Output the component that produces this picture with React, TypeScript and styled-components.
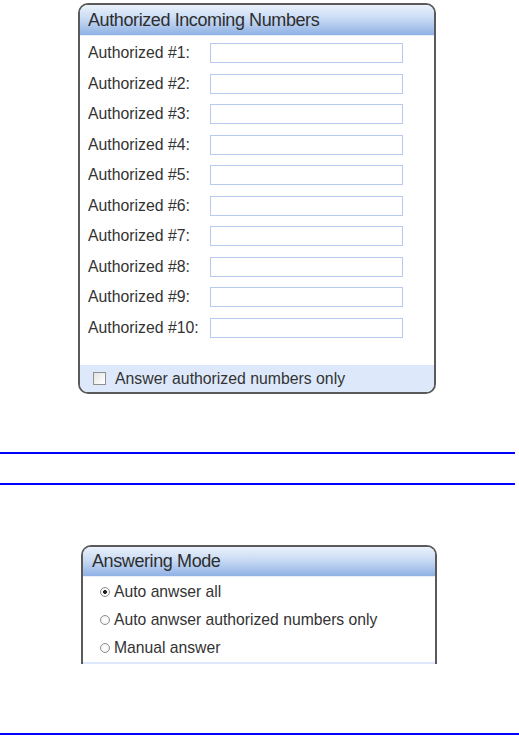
import styled, { createGlobalStyle } from "styled-components";

const GlobalStyle = createGlobalStyle`
  html, body {
    margin: 0;
    padding: 0;
    background: #ffffff;
  }
  body {
    font-family: "Liberation Sans", Arial, sans-serif;
    color: #333333;
  }
`;

export default function App() {
  const authorized = Array.from({ length: 10 }, (_, i) => `Authorized #${i + 1}:`);
  const modes = [
    { label: "Auto anwser all", checked: true },
    { label: "Auto anwser authorized numbers only", checked: false },
    { label: "Manual answer", checked: false },
  ];

  return (
    <Page>
      <GlobalStyle />
      <Panel $left={78} $top={3} $width={358}>
        <PanelHeader $pad={8}>Authorized Incoming Numbers</PanelHeader>
        <NumberList>
          {authorized.map((label) => (
            <NumberRow key={label}>
              <Label>{label}</Label>
              <NumberInput type="text" />
            </NumberRow>
          ))}
        </NumberList>
        <Footer>
          <CheckBox />
          <FooterText>Answer authorized numbers only</FooterText>
        </Footer>
      </Panel>

      <Rule $top={58} $width={515} />
      <Rule $top={29} $width={515} />

      <Panel $left={81} $top={60} $width={356} $cut>
        <PanelHeader $pad={9} $height={29}>Answering Mode</PanelHeader>
        <ModeList>
          {modes.map((mode) => (
            <ModeRow key={mode.label}>
              <Radio $checked={mode.checked} />
              <ModeText>{mode.label}</ModeText>
            </ModeRow>
          ))}
        </ModeList>
        <CutBand />
      </Panel>

      <Rule $top={69} $width={519} />
    </Page>
  );
}

const Page = styled.div`
  width: 519px;
  height: 735px;
  display: flex;
  flex-direction: column;
  overflow: hidden;
`;

const Panel = styled.div<{ $left: number; $top: number; $width: number; $cut?: boolean }>`
  margin-left: ${(p) => p.$left}px;
  margin-top: ${(p) => p.$top}px;
  width: ${(p) => p.$width}px;
  box-sizing: border-box;
  border: 2px solid #5a5a5a;
  border-bottom: ${(p) => (p.$cut ? "none" : "2px solid #5a5a5a")};
  border-radius: ${(p) => (p.$cut ? "10px 10px 0 0" : "10px")};
  background: #ffffff;
  overflow: hidden;
  display: flex;
  flex-direction: column;
`;

const PanelHeader = styled.div<{ $pad: number; $height?: number }>`
  height: ${(p) => p.$height ?? 30}px;
  padding-left: ${(p) => p.$pad}px;
  display: flex;
  align-items: center;
  background: linear-gradient(to bottom, #eaf1fb 0%, #c9dbf4 45%, #8fb1e4 100%);
  border-bottom: 1px solid #e8eef8;
  font-size: 18px;
  letter-spacing: -0.4px;
  color: #2e2e2e;
`;

const NumberList = styled.div`
  display: flex;
  flex-direction: column;
  padding: 2px 0 22px 8px;
`;

const NumberRow = styled.div`
  height: 30.5px;
  display: grid;
  grid-template-columns: 122px 193px;
  align-items: center;
`;

const Label = styled.span`
  font-size: 15.8px;
  color: #333333;
  white-space: nowrap;
`;

const NumberInput = styled.input`
  box-sizing: border-box;
  width: 193px;
  height: 20px;
  margin: 0;
  border: 1px solid #b7cbee;
  background: #ffffff;
  outline: none;
`;

const Footer = styled.div`
  height: 27px;
  display: flex;
  align-items: center;
  gap: 9px;
  padding-left: 13px;
  background: #dde9fa;
`;

const CheckBox = styled.span`
  box-sizing: border-box;
  width: 13px;
  height: 13px;
  border: 1px solid #8f8f8f;
  background: linear-gradient(135deg, #e4e4e4, #ffffff);
`;

const FooterText = styled.span`
  font-size: 15.8px;
  color: #333333;
`;

const Rule = styled.div<{ $top: number; $width: number }>`
  flex: none;
  margin-top: ${(p) => p.$top}px;
  width: ${(p) => p.$width}px;
  height: 2px;
  background: #0000ff;
`;

const ModeList = styled.div`
  display: flex;
  flex-direction: column;
  padding-top: 1px;
`;

const ModeRow = styled.div`
  height: 28px;
  display: flex;
  align-items: center;
  gap: 4px;
  padding-left: 17px;
`;

const Radio = styled.span<{ $checked: boolean }>`
  box-sizing: border-box;
  width: 10px;
  height: 10px;
  border-radius: 50%;
  border: 1px solid #8c8c8c;
  background: ${(p) =>
    p.$checked
      ? "radial-gradient(circle, #222 0, #222 1.6px, #f4f4f4 2.2px, #fff 100%)"
      : "radial-gradient(circle, #fff 0, #f0f0f0 100%)"};
`;

const ModeText = styled.span`
  font-size: 15.7px;
  color: #333333;
`;

const CutBand = styled.div`
  height: 2px;
  background: #dde9fa;
`;
